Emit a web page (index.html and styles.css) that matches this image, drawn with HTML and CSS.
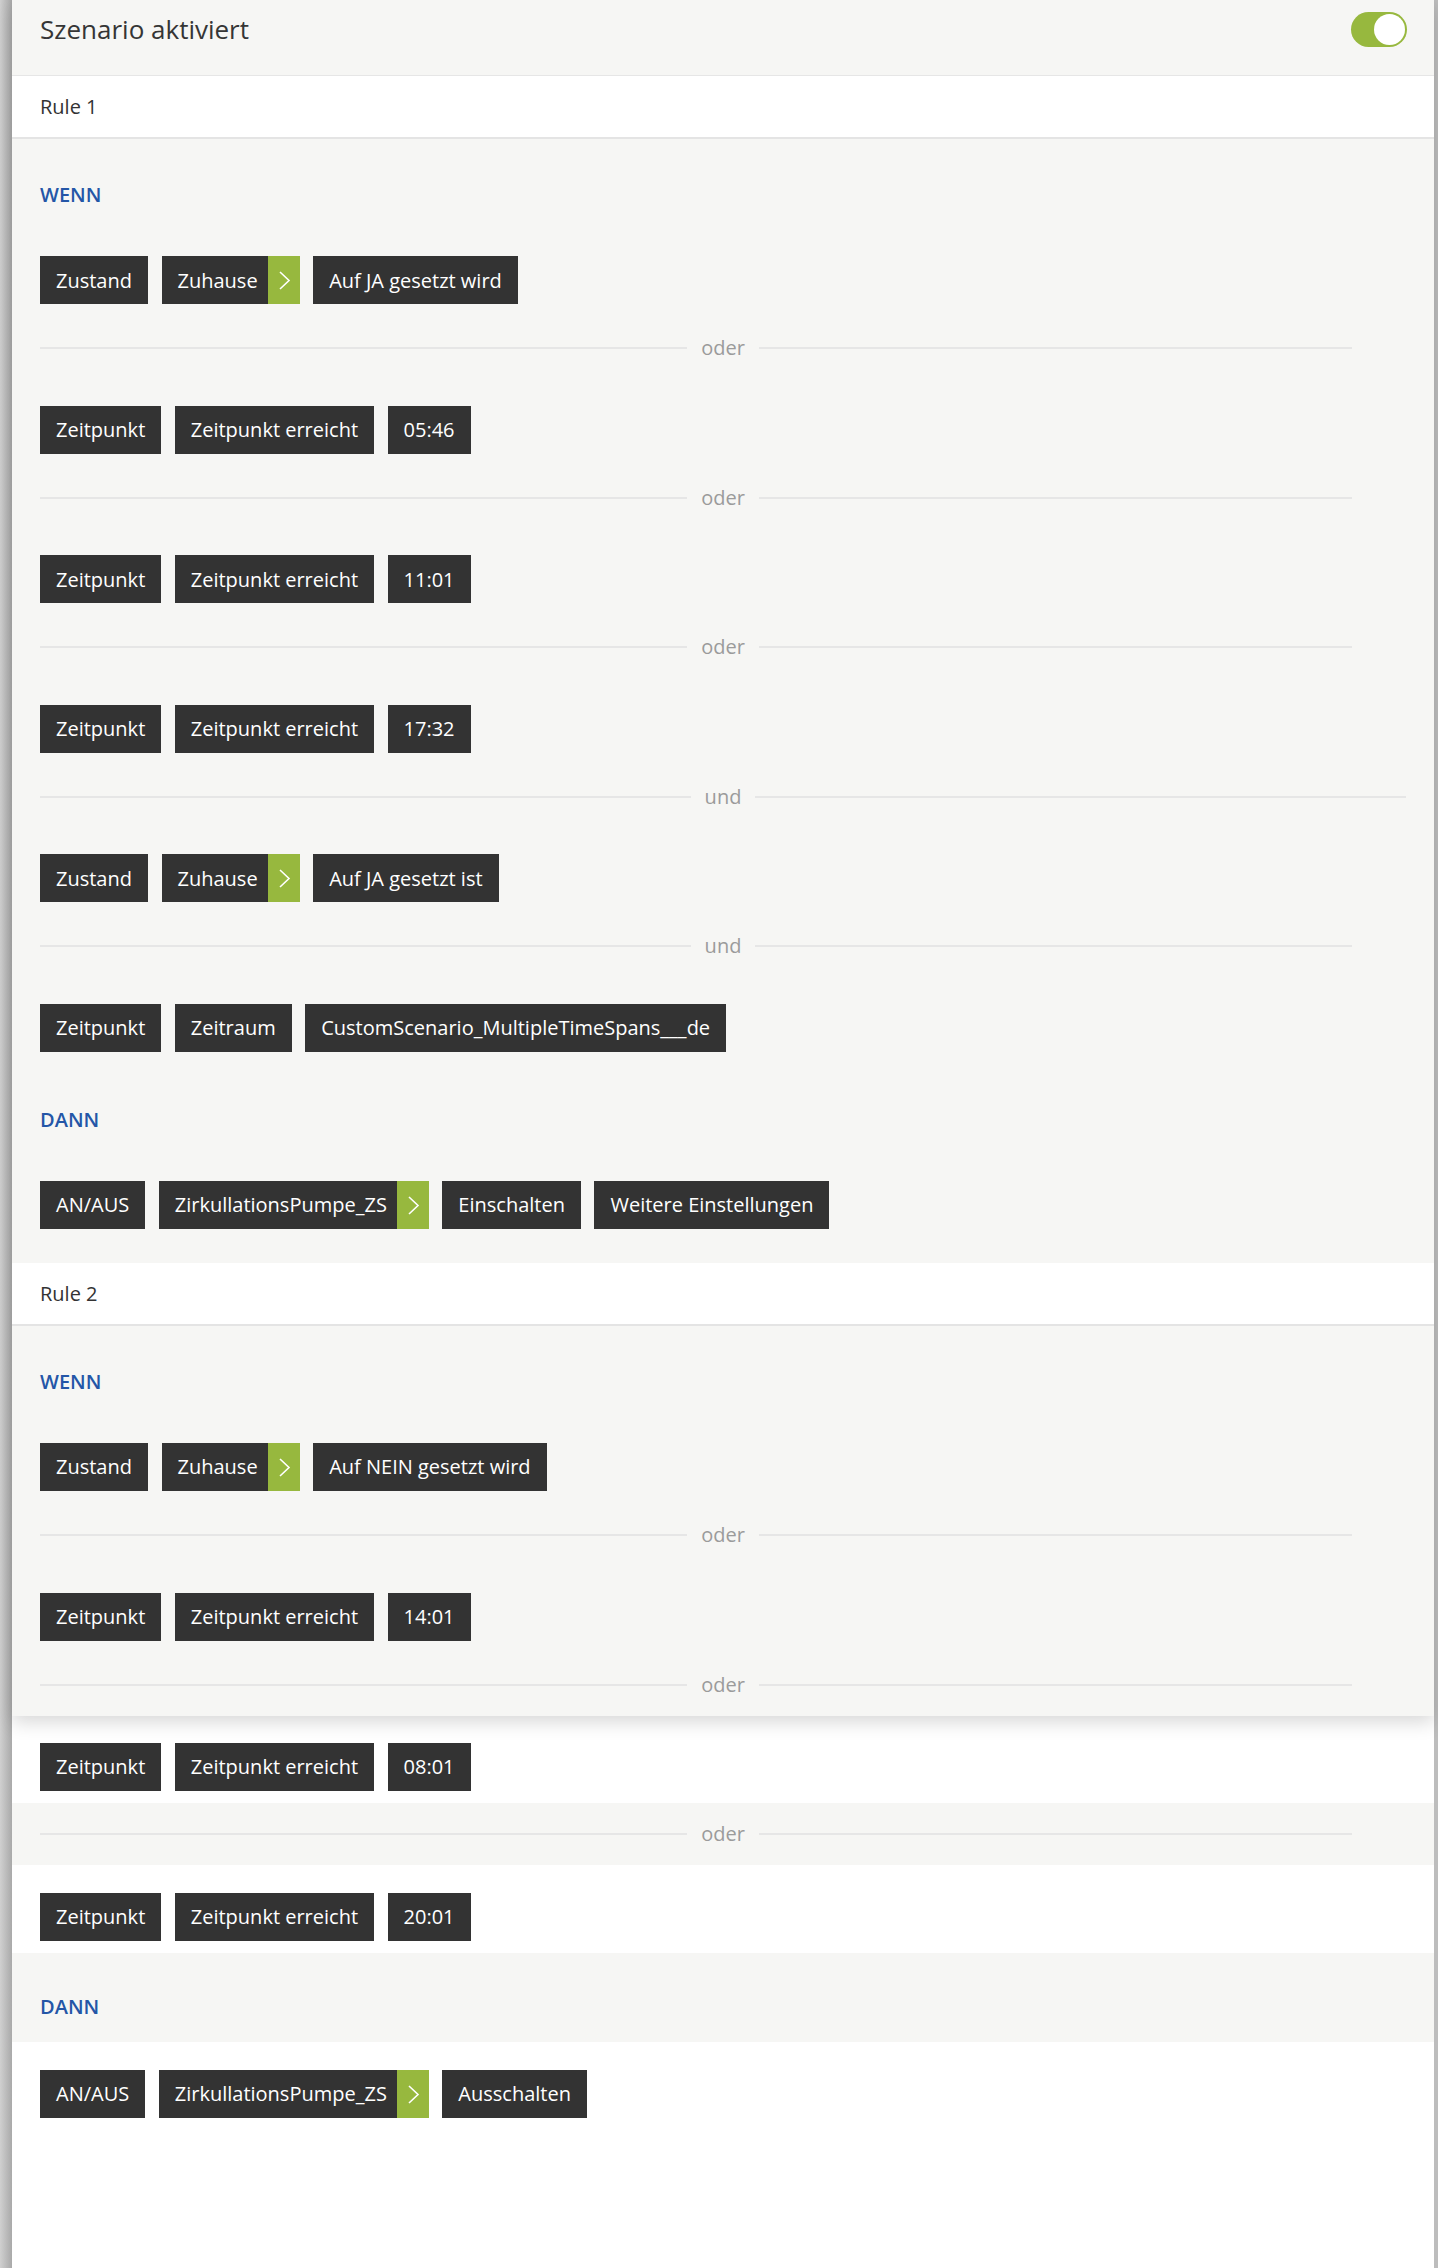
FILE: index.html
```html
<!DOCTYPE html>
<html lang="de">
<head>
    <meta charset="UTF-8">
    <meta name="viewport" content="width=device-width, initial-scale=1.0">
    <title>Szenario</title>
    <link rel="stylesheet" href="styles.css">
</head>
<body>

    <div class="page">
        <div class="panel">
            <!-- Header -->
            <header class="scenario-head">
                <h1>Szenario aktiviert</h1>
                <span class="toggle"><span class="knob"></span></span>
            </header>

            <!-- Rule 1 -->
            <section class="rule">
                <div class="rule-title">Rule 1</div>
                <div class="rule-body">
                    <div class="label">WENN</div>
                    <div class="chips">
                        <span class="chip">Zustand</span>
                        <span class="chip link">Zuhause<span class="chev"><svg width="32" height="48" viewBox="0 0 32 48"><path d="M12 16 L21 24.5 L12 33" /></svg></span></span>
                        <span class="chip">Auf JA gesetzt wird</span>
                    </div>
                    <div class="sep"><span class="line"></span><span class="word">oder</span><span class="line short"></span></div>
                    <div class="chips">
                        <span class="chip">Zeitpunkt</span>
                        <span class="chip">Zeitpunkt erreicht</span>
                        <span class="chip">05:46</span>
                    </div>
                    <div class="sep"><span class="line"></span><span class="word">oder</span><span class="line short"></span></div>
                    <div class="chips">
                        <span class="chip">Zeitpunkt</span>
                        <span class="chip">Zeitpunkt erreicht</span>
                        <span class="chip">11:01</span>
                    </div>
                    <div class="sep"><span class="line"></span><span class="word">oder</span><span class="line short"></span></div>
                    <div class="chips">
                        <span class="chip">Zeitpunkt</span>
                        <span class="chip">Zeitpunkt erreicht</span>
                        <span class="chip">17:32</span>
                    </div>
                    <div class="sep"><span class="line"></span><span class="word">und</span><span class="line"></span></div>
                    <div class="chips">
                        <span class="chip">Zustand</span>
                        <span class="chip link">Zuhause<span class="chev"><svg width="32" height="48" viewBox="0 0 32 48"><path d="M12 16 L21 24.5 L12 33" /></svg></span></span>
                        <span class="chip">Auf JA gesetzt ist</span>
                    </div>
                    <div class="sep"><span class="line"></span><span class="word">und</span><span class="line short"></span></div>
                    <div class="chips">
                        <span class="chip">Zeitpunkt</span>
                        <span class="chip">Zeitraum</span>
                        <span class="chip">CustomScenario_MultipleTimeSpans___de</span>
                    </div>

                    <div class="label then">DANN</div>
                    <div class="chips">
                        <span class="chip">AN/AUS</span>
                        <span class="chip link">ZirkullationsPumpe_ZS<span class="chev"><svg width="32" height="48" viewBox="0 0 32 48"><path d="M12 16 L21 24.5 L12 33" /></svg></span></span>
                        <span class="chip">Einschalten</span>
                        <span class="chip">Weitere Einstellungen</span>
                    </div>
                </div>
            </section>

            <!-- Rule 2 -->
            <section class="rule">
                <div class="rule-title">Rule 2</div>
                <div class="rule-body cut">
                    <div class="label">WENN</div>
                    <div class="chips">
                        <span class="chip">Zustand</span>
                        <span class="chip link">Zuhause<span class="chev"><svg width="32" height="48" viewBox="0 0 32 48"><path d="M12 16 L21 24.5 L12 33" /></svg></span></span>
                        <span class="chip">Auf NEIN gesetzt wird</span>
                    </div>
                    <div class="sep"><span class="line"></span><span class="word">oder</span><span class="line short"></span></div>
                    <div class="chips">
                        <span class="chip">Zeitpunkt</span>
                        <span class="chip">Zeitpunkt erreicht</span>
                        <span class="chip">14:01</span>
                    </div>
                    <div class="sep"><span class="line"></span><span class="word">oder</span><span class="line short"></span></div>
                </div>
            </section>
        </div>

        <!-- rest of rule 2, outside the panel -->
        <div class="tail">
            <div class="tail-row first">
                <div class="chips">
                    <span class="chip">Zeitpunkt</span>
                    <span class="chip">Zeitpunkt erreicht</span>
                    <span class="chip">08:01</span>
                </div>
            </div>
            <div class="tail-sep">
                <div class="sep"><span class="line"></span><span class="word">oder</span><span class="line short"></span></div>
            </div>
            <div class="tail-row">
                <div class="chips">
                    <span class="chip">Zeitpunkt</span>
                    <span class="chip">Zeitpunkt erreicht</span>
                    <span class="chip">20:01</span>
                </div>
            </div>
            <div class="tail-label">
                <div class="label">DANN</div>
            </div>
            <div class="tail-row">
                <div class="chips">
                    <span class="chip">AN/AUS</span>
                    <span class="chip link">ZirkullationsPumpe_ZS<span class="chev"><svg width="32" height="48" viewBox="0 0 32 48"><path d="M12 16 L21 24.5 L12 33" /></svg></span></span>
                    <span class="chip">Ausschalten</span>
                </div>
            </div>
        </div>
    </div>

</body>
</html>
```

FILE: styles.css
```css
* {
    box-sizing: border-box;
}

body {
    margin: 0;
    padding: 0;
    font-family: 'Open Sans', 'Liberation Sans', sans-serif;
    color: #333;
    background: linear-gradient(to right, #d0d0d0 0, #a9a9a9 12px, #bdbdbd 12px);
}

.page {
    margin: 0 4px 0 12px;
    min-height: 100vh;
    background: #fff;
}

.panel {
    position: relative;
    z-index: 1;
    background: #f6f6f4;
    box-shadow: 0 6px 18px rgba(0, 0, 0, 0.16);
}

/* Header */
.scenario-head {
    display: flex;
    justify-content: space-between;
    align-items: flex-start;
    height: 76px;
    padding: 11px 27px 0 28px;
    border-bottom: 1px solid #e6e6e6;
}

.scenario-head h1 {
    margin: 0;
    font-size: 26px;
    font-weight: 400;
    line-height: 36px;
    color: #353535;
}

.toggle {
    width: 56px;
    height: 35px;
    margin-top: 1px;
    border-radius: 18px;
    background: #97b83e;
    padding: 2px;
    display: flex;
    justify-content: flex-end;
}

.knob {
    display: block;
    width: 31px;
    height: 31px;
    border-radius: 50%;
    background: #fff;
}

/* Rules */
.rule-title {
    display: flex;
    align-items: center;
    height: 63px;
    padding: 0 28px;
    background: #fff;
    border-bottom: 2px solid #e4e4e4;
    font-size: 20px;
}

.rule-body {
    padding: 42px 28px 34px;
}

.rule-body.cut {
    padding-bottom: 17px;
}

.rule-body.cut .sep:last-child {
    margin-bottom: 0;
}

.label {
    font-size: 20px;
    font-weight: 600;
    line-height: 28px;
    color: #2456a7;
    margin-bottom: 47px;
}

.label.then {
    margin-top: 54px;
}

.chips {
    display: flex;
    gap: 13.5px;
}

.chip {
    display: flex;
    align-items: center;
    height: 48px;
    padding: 0 16px;
    background: #333;
    color: #fff;
    font-size: 20px;
    white-space: nowrap;
}

.chip.link {
    padding-right: 0;
}

.chev {
    display: block;
    width: 32px;
    height: 48px;
    margin-left: 10px;
    background: #97b83e;
}

.chev svg {
    display: block;
}

.chev path {
    fill: none;
    stroke: #fff;
    stroke-width: 1.6;
}

/* oder / und */
.sep {
    display: grid;
    grid-template-columns: 1fr auto 1fr;
    align-items: center;
    height: 28px;
    margin: 30px 0 43.6px;
}

.sep .line {
    height: 2px;
    background: #e6e6e6;
}

.sep .line.short {
    margin-right: 54px;
}

.sep .word {
    padding: 0 14px;
    font-size: 20px;
    line-height: 28px;
    color: #9b9b9b;
}

/* Below the panel */
.tail-row {
    padding: 28px 28px 12px;
    background: #fff;
}

.tail-row.first {
    padding-top: 27px;
}

.tail-sep {
    display: flex;
    flex-direction: column;
    justify-content: center;
    height: 62px;
    padding: 0 28px;
    background: #f6f6f4;
}

.tail-sep .sep {
    margin: 0;
}

.tail-label {
    height: 89px;
    padding: 40px 28px 0;
    background: #f6f6f4;
}

.tail-label .label {
    margin: 0;
}
```
